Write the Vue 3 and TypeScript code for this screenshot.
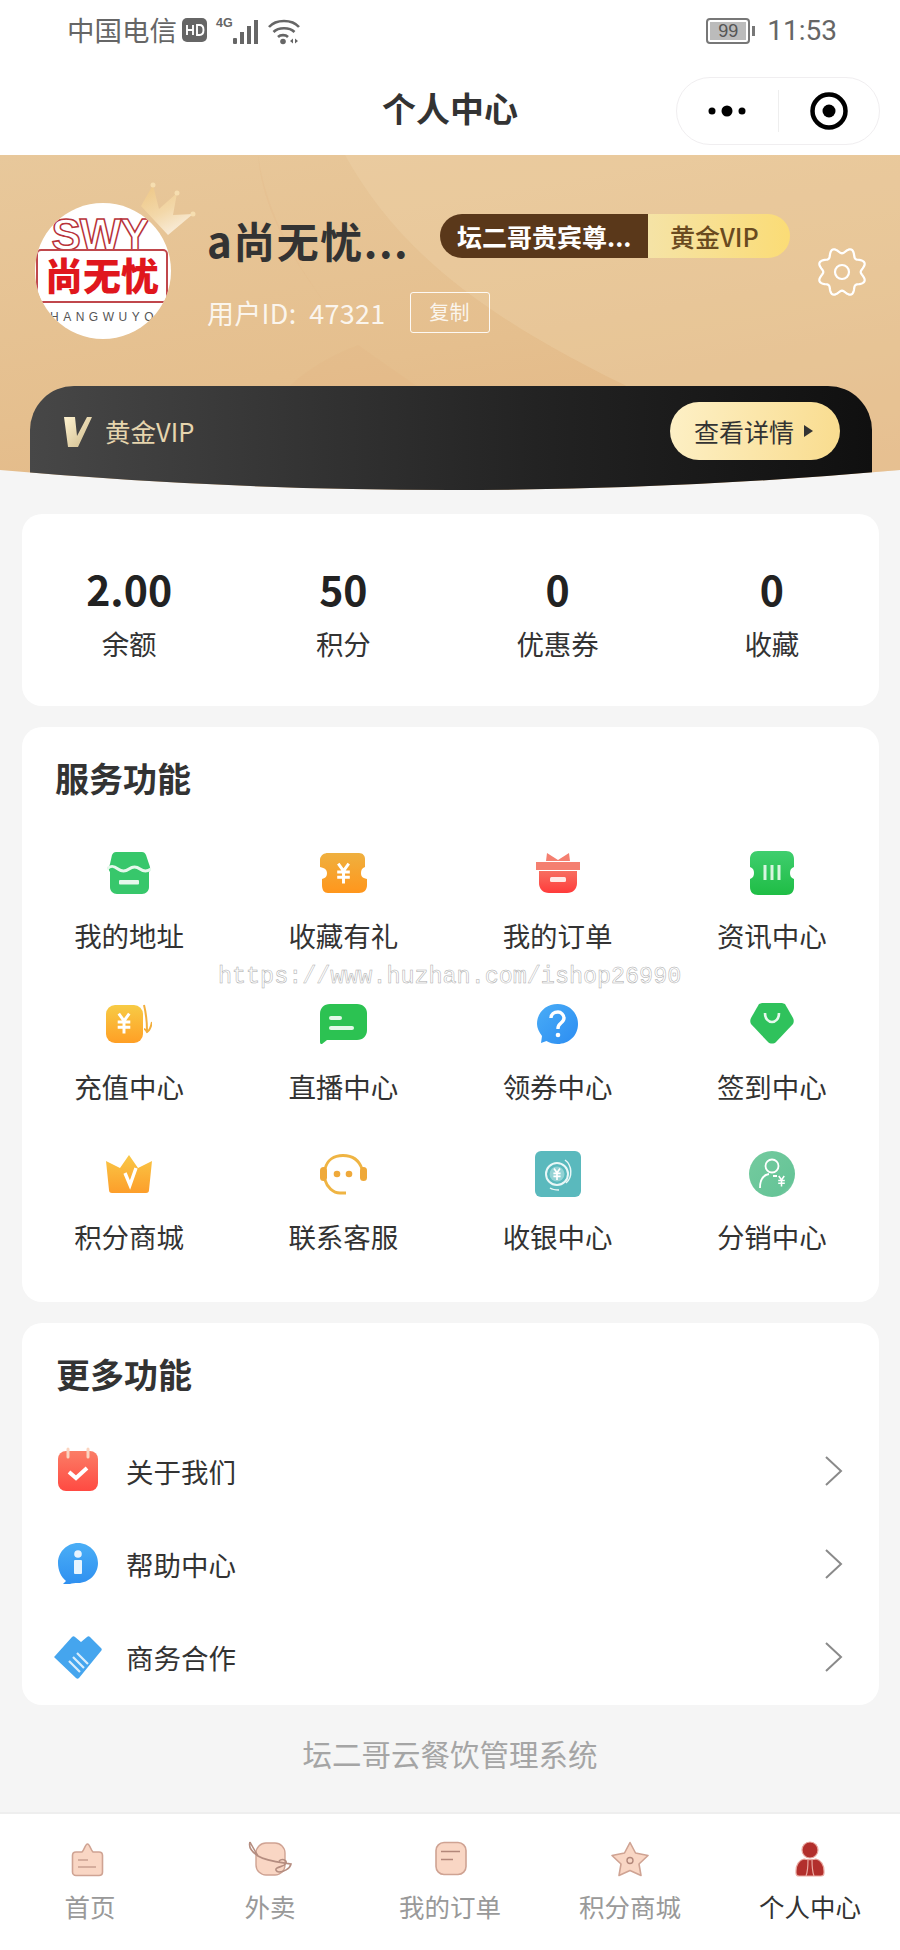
<script setup lang="ts">
const yen = (x: number, y: number, s = 1, c = "#fff") =>
  `<g transform="translate(${x} ${y}) scale(${s})" fill="none" stroke="${c}" stroke-width="2.8"><path d="M-5-9 0-2 5-9M-6-1H6M-6 4H6M0-2V10"/></g>`;

// rounded 8-tooth outline for the settings icon
const gearPath = Array.from({ length: 144 }, (_, i) => {
  const a = (i / 144) * Math.PI * 2;
  const r = 21.5 + 2.8 * Math.cos(a * 8 + Math.PI);
  return `${(25 + r * Math.cos(a)).toFixed(2)} ${(25 + r * Math.sin(a)).toFixed(2)}`;
}).join("L");

const services = [
  {
    label: "我的地址",
    w: 44,
    h: 42,
    svg: `<path fill="#37c76b" d="M9 0h26c2 0 3 1 4 3l3 9c1 3 2 5 0 8v15c0 4-3 7-7 7H10c-4 0-7-3-7-7V20c-2-3-1-5 0-8L5 3c1-2 2-3 4-3z"/><path fill="none" stroke="#e6f8ec" stroke-width="3" d="M0 17c4-4 7-3 11 0s7 3 11 0 7-3 11 0 7 3 11 0"/><rect x="12" y="28" width="20" height="4.500" rx="1" fill="#e6f8ec"/>`,
  },
  {
    label: "收藏有礼",
    w: 47,
    h: 40,
    svg: `<defs><linearGradient id="g2" x1="0" y1="0" x2="0" y2="1"><stop offset="0" stop-color="#efb03f"/><stop offset="1" stop-color="#ff961c"/></linearGradient></defs><path fill="url(#g2)" d="M8 0h31c4 0 6 3 6 6v8c-3 1-4 3-4 6s1 5 6 6v6c0 5-3 8-8 8H8c-4 0-6-3-6-8v-6c4-1 5-3 5-6s-2-5-7-6V6c1-4 4-6 8-6z"/>${yen(23.5, 20, 1.05)}`,
  },
  {
    label: "我的订单",
    w: 44,
    h: 40,
    svg: `<defs><linearGradient id="g3" x1="0" y1="0" x2="0" y2="1"><stop offset="0" stop-color="#f76e60"/><stop offset="1" stop-color="#ff3b3b"/></linearGradient></defs><path fill="#f47f70" d="M11 0l11 7L33 0l1 8H10zM0 9h44v8H0z"/><path fill="url(#g3)" d="M3 18h38v12c0 6-4 10-10 10H13C7 40 3 36 3 30z"/><rect x="14" y="24" width="16" height="5" rx="1.5" fill="#ffe9e6"/>`,
  },
  {
    label: "资讯中心",
    w: 44,
    h: 44,
    svg: `<defs><linearGradient id="g4" x1="0" y1="0" x2="0" y2="1"><stop offset="0" stop-color="#3fce6e"/><stop offset="1" stop-color="#1fbd45"/></linearGradient></defs><path fill="url(#g4)" d="M8 0h28c5 0 8 3 8 8v8c-3 1-4 3-4 6s1 5 4 6v8c0 5-3 8-8 8H8c-5 0-8-3-8-8v-8c3-1 4-3 4-6s-1-5-4-6V8c0-5 3-8 8-8z"/><path stroke="#d8f5e0" stroke-width="3" d="M15 14v15M22 14v15M29 14v15"/>`,
  },
  {
    label: "充值中心",
    w: 46,
    h: 40,
    svg: `<defs><linearGradient id="g5" x1="0" y1="0" x2="0" y2="1"><stop offset="0" stop-color="#f7cb45"/><stop offset="1" stop-color="#ff9f25"/></linearGradient></defs><rect y="1" width="37" height="38" rx="9" fill="url(#g5)"/>${yen(18, 19, 1.05)}<path fill="none" stroke="#f2ae3c" stroke-width="2" d="M38 1c2 8 3 14 3 26M46 18c-1 5-3 9-5 10-1-2-2-3-3-3"/>`,
  },
  {
    label: "直播中心",
    w: 47,
    h: 40,
    svg: `<path fill="#2cc252" d="M10 0h27c6 0 10 4 10 9v17c0 6-4 10-10 10H7L2 40c-1 0-2 0-2-2V10C0 4 4 0 10 0z"/><rect x="9" y="12" width="13" height="4" rx="2" fill="#e3f8e8"/><rect x="9" y="22" width="25" height="4" rx="2" fill="#e3f8e8"/>`,
  },
  {
    label: "领券中心",
    w: 41,
    h: 40,
    svg: `<defs><linearGradient id="g7" x1="0" y1="0" x2="1" y2="1"><stop offset="0" stop-color="#49acf6"/><stop offset="1" stop-color="#2c8df2"/></linearGradient></defs><path fill="url(#g7)" d="M20.500 0C32 0 41 8.500 41 20s-9 20-20.500 20c-4 0-8-1-11-3L4 39l1-7C2 28 0 24 0 20 0 8.500 9 0 20.500 0z"/><path fill="none" stroke="#fff" stroke-width="3.400" d="M14 14c0-4 3-6 7-6 3 0 6 3 6 6 0 5-6 5-6 10v1"/><circle cx="21" cy="31" r="2.300" fill="#fff"/>`,
  },
  {
    label: "签到中心",
    w: 44,
    h: 41,
    svg: `<path fill="#2fc25c" d="M12 0h20l3 1 8 14c1 2 1 4 0 6L26 39c-2 2-6 2-8 0L1 21c-1-2-1-4 0-6L9 1z"/><path fill="none" stroke="#e6f8ec" stroke-width="2.600" d="M15 10c0 12 14 12 14 0"/>`,
  },
  {
    label: "积分商城",
    w: 46,
    h: 38,
    svg: `<defs><linearGradient id="g9" x1="0" y1="0" x2="0" y2="1"><stop offset="0" stop-color="#f9c847"/><stop offset="1" stop-color="#fd9e2a"/></linearGradient></defs><path fill="url(#g9)" d="M23 0l9 13L46 6l-3 29c0 2-1 3-3 3H6c-2 0-3-1-3-3L0 6l14 7z"/><path fill="none" stroke="#fff" stroke-width="3.400" d="M19 18l5 12 6-17"/>`,
  },
  {
    label: "联系客服",
    w: 47,
    h: 41,
    svg: `<path fill="none" stroke="#efb443" stroke-width="2.800" d="M5 15C7 6 14 1.500 23 1.500S39 6 42 15M5 26c2 7 8 13 15 13h6"/><rect y="13" width="7" height="14" rx="3.500" fill="#efa93a"/><rect x="40" y="13" width="7" height="14" rx="3.500" fill="#efa93a"/><circle cx="17" cy="20" r="3.300" fill="#efa93a"/><circle cx="29" cy="20" r="3.300" fill="#efa93a"/>`,
  },
  {
    label: "收银中心",
    w: 46,
    h: 46,
    svg: `<rect width="46" height="46" rx="6" fill="#5ab9bd"/><circle cx="22" cy="23" r="11" fill="none" stroke="#e9f7f7" stroke-width="2"/><circle cx="22" cy="23" r="7.500" fill="#e9f7f7" opacity=".4"/><path fill="none" stroke="#e9f7f7" stroke-width="1.500" d="M30 9c7 5 8 17 1 23M24 39c-3 0-6 0-9-2"/>${yen(22, 23, 0.6)}`,
  },
  {
    label: "分销中心",
    w: 46,
    h: 46,
    svg: `<defs><linearGradient id="g12" x1="0" y1="0" x2="1" y2="1"><stop offset="0" stop-color="#74cb9f"/><stop offset=".8" stop-color="#66c497"/><stop offset="1" stop-color="#9ad3b8"/></linearGradient></defs><circle cx="23" cy="23" r="23" fill="url(#g12)"/><circle cx="23" cy="15" r="6.500" fill="none" stroke="#fff" stroke-width="1.800"/><path fill="none" stroke="#fff" stroke-width="1.800" d="M11 37c0-8 3-13 9-14M24 25h4"/>${yen(32.5, 30, 0.55)}`,
  },
];

const moreItems = [
  {
    label: "关于我们",
    svg: `<defs><linearGradient id="m1" x1="0" y1="0" x2="0" y2="1"><stop offset="0" stop-color="#fb7d66"/><stop offset="1" stop-color="#ff4a42"/></linearGradient></defs><rect x="4" y="4" width="40" height="40" rx="8" fill="url(#m1)"/><path stroke="#fbd4c0" stroke-width="3" stroke-linecap="round" d="M14 2v8M34 2v8"/><path fill="none" stroke="#fff" stroke-width="4" d="M15 25l7 6 11-10"/>`,
  },
  {
    label: "帮助中心",
    svg: `<defs><linearGradient id="m2" x1="0" y1="0" x2="0" y2="1"><stop offset="0" stop-color="#4aaef6"/><stop offset="1" stop-color="#2f90f0"/></linearGradient></defs><path fill="url(#m2)" d="M24 3c11 0 20 9 20 20s-9 20-20 20c-3 0-6 0-8 1H9l3-3C7 37 4 30 4 23 4 12 13 3 24 3z"/><circle cx="24" cy="14" r="3.800" fill="#e8f4fe"/><rect x="20" y="20" width="8" height="14" rx="1" fill="#e8f4fe"/>`,
  },
  {
    label: "商务合作",
    svg: `<path fill="#45a5ee" d="M1 23 18 4c1-1 2-1 3 0l6 5 6-5c1-1 2-1 3 0l11 11c1 1 1 2 0 3L25 45c-1 1-2 1-3 0L1 25c-1-1-1-1 0-2z"/><path stroke="#d8edfc" stroke-width="2.200" d="M15 28l11 11M19 24l11 11M23 20l11 11"/>`,
  },
];

const tabs = [
  {
    label: "首页",
    active: false,
    svg: `<path fill="#f9d6c4" stroke="#cfa393" stroke-width="1.600" stroke-linejoin="round" d="M7 11h6c2-1 3-8 5.500-8S22 10 24 11h6c2 0 3.500 1.500 3.500 3.500V31c0 2-1.500 3.500-3.500 3.500H7c-2 0-3.500-1.500-3.500-3.500V14.500C3.500 12.500 5 11 7 11z"/><path stroke="#c9a090" stroke-width="1.400" d="M9 19h10M9 26h18"/>`,
  },
  {
    label: "外卖",
    active: false,
    svg: `<rect x="7" y="2" width="29" height="32" rx="10" fill="#f9d6c4" stroke="#cfa393" stroke-width="1.400"/><path fill="none" stroke="#b58d80" stroke-width="1.600" d="M1 1C-1 7 3 11 9 15c8 5 20 6 33 8-1 5-8 8-12 8-3 0-4-3-2-4 3-2 7-1 9-5 1-3-4-5-7-2M1 1c2 4 5 9 8 14"/>`,
  },
  {
    label: "我的订单",
    active: false,
    svg: `<rect x="7" y="1.500" width="30" height="32" rx="8" fill="#f9d6c4" stroke="#cfa393" stroke-width="1.600"/><path stroke="#b3877a" stroke-width="1.600" d="M12 10.500h19M12 18.500h12"/>`,
  },
  {
    label: "积分商城",
    active: false,
    svg: `<path fill="#f9d6c4" stroke="#cfa393" stroke-width="1.600" stroke-linejoin="round" d="M21 1.500l5.500 10.500L39 14.500 30 23l2 11.500-11-5-11 5 2-11.500-9-8.500L15.500 12z"/><circle cx="21" cy="19.500" r="3" fill="none" stroke="#b3877a" stroke-width="1.400"/>`,
  },
  {
    label: "个人中心",
    active: true,
    svg: `<circle cx="21" cy="9" r="8" fill="#b22f2c" stroke="#e9a9a1" stroke-width="1.200"/><path fill="#b22f2c" stroke="#e9a9a1" stroke-width="1.200" d="M15 18c2 1 10 1 12 0 5 1 8 6 8 12v2c0 2-1 3-3 3H10c-2 0-3-1-3-3v-2c0-6 3-11 8-12z"/><path fill="none" stroke="#e9a9a1" stroke-width="1.200" d="M19 18c0 6 0 12-2 17M23 18c0 6 0 12 2 17"/>`,
  },
];

const stats = [
  { value: "2.00", label: "余额" },
  { value: "50", label: "积分" },
  { value: "0", label: "优惠券" },
  { value: "0", label: "收藏" },
];
</script>

<template>
  <div class="page">
    <div class="status">
      <div class="status-left">
        <span>中国电信</span>
        <svg width="25" height="24" viewBox="0 0 25 24" class="hd">
          <rect width="25" height="24" rx="5" fill="#666" />
          <path d="M5 7v10M5 12h6M11 7v10M15 7v10h2.500c3 0 4-2.200 4-5s-1-5-4-5z" fill="none" stroke="#fff" stroke-width="1.900" />
        </svg>
        <span class="net">4G</span>
        <svg width="26" height="26" viewBox="0 0 26 26" class="signal">
          <rect x="0" y="19" width="4" height="6" rx="1" fill="#666" />
          <rect x="7" y="13" width="4" height="12" fill="#666" />
          <rect x="14" y="7" width="4" height="18" fill="#666" />
          <rect x="21" y="1" width="4" height="24" fill="#666" />
        </svg>
        <svg width="32" height="26" viewBox="0 0 32 26" class="wifi">
          <path d="M1 8c7-8 23-8 30 0M5.500 13c5-5 16-5 21 0M10 18c2.500-2.500 7.500-2.500 10 0" fill="none" stroke="#666" stroke-width="2.600" />
          <circle cx="15" cy="22.500" r="2.800" fill="#666" />
          <path d="M22 22l3-2.500v5zM27 19.500l3 2.500-3 2.500z" fill="#666" />
        </svg>
      </div>
      <div class="status-right">
        <div class="battery">
          <span class="battery-level">99</span>
        </div>
        <i class="battery-tip"></i>
        <span class="time">11:53</span>
      </div>
    </div>

    <div class="nav">
      <span class="nav-title">个人中心</span>
      <div class="capsule">
        <svg width="40" height="12" viewBox="0 0 40 12">
          <circle cx="5" cy="6" r="3.500" />
          <circle cx="20" cy="6" r="5.500" />
          <circle cx="35" cy="6" r="3.500" />
        </svg>
        <i class="capsule-line"></i>
        <svg width="40" height="40" viewBox="0 0 40 40">
          <circle cx="20" cy="20" r="16.500" fill="none" stroke="#000" stroke-width="4.500" />
          <circle cx="20" cy="20" r="6.500" />
        </svg>
      </div>
    </div>

    <div class="hero">
      <svg class="hero-shapes" width="900" height="335" viewBox="0 0 900 335">
        <path d="M258 0c10 70 50 130 100 190l200 140H240c10-60 40-110 118-140C300 120 262 60 258 0z" fill="#e2b27e" opacity=".18" />
        <path d="M345 0c50 90 130 160 300 240l255 90V0z" fill="#eed6ae" opacity=".32" />
      </svg>
      <div class="profile">
        <div class="avatar">
          <svg class="avatar-logo" width="136" height="136" viewBox="0 0 136 136">
            <defs>
              <clipPath id="ac"><circle cx="68" cy="68" r="68" /></clipPath>
            </defs>
            <circle cx="68" cy="68" r="68" fill="#fff" />
            <g clip-path="url(#ac)">
              <text class="logo-swy" x="65" y="47">SWY</text>
              <rect x="2" y="47" width="130" height="52" rx="4" fill="#fff" stroke="#c0474c" stroke-width="2" />
              <text class="logo-name" x="67" y="87">尚无忧</text>
              <text class="logo-pinyin" x="69" y="118">HANGWUYO</text>
            </g>
          </svg>
          <svg class="crown" width="62" height="54" viewBox="0 0 62 54">
            <defs>
              <linearGradient id="cg" x1="0" y1="0" x2="0.500" y2="1">
                <stop offset="0" stop-color="#f0c67c" />
                <stop offset="0.600" stop-color="#f7dfb0" />
                <stop offset="1" stop-color="#fffaf0" />
              </linearGradient>
            </defs>
            <path d="M6 24 18 3l6 24L42 11l-4 22 20-1-25 21z" fill="url(#cg)" opacity=".72" />
            <circle cx="18" cy="3" r="2.500" fill="#f6deb0" />
            <circle cx="42" cy="11" r="2.500" fill="#f6deb0" />
            <circle cx="58" cy="32" r="2.500" fill="#f6deb0" />
          </svg>
        </div>
        <div class="profile-info">
          <div class="profile-top">
            <span class="profile-name">a尚无忧...</span>
            <div class="badge">
              <span class="badge-left">坛二哥贵宾尊...</span>
              <span class="badge-right">黄金VIP</span>
            </div>
          </div>
          <div class="profile-id">
            <span>用户ID:&nbsp;&nbsp;47321</span>
            <span class="copy">复制</span>
          </div>
        </div>
        <svg class="gear" width="50" height="50" viewBox="0 0 50 50">
          <path :d="`M${gearPath}Z`" fill="none" stroke="#fff" stroke-width="2.200" />
          <circle cx="25" cy="25" r="7" fill="none" stroke="#fff" stroke-width="2.200" />
        </svg>
      </div>
      <div class="vip">
        <svg width="30" height="32" viewBox="0 0 30 32">
          <defs>
            <linearGradient id="vg" x1="0" y1="0" x2="1" y2="1">
              <stop offset="0" stop-color="#fff3d0" />
              <stop offset="1" stop-color="#cdb98a" />
            </linearGradient>
          </defs>
          <path d="M1 1h11l2 19L24 1h5L15 31H5z" fill="url(#vg)" />
        </svg>
        <span class="vip-label">黄金VIP</span>
        <div class="vip-btn">
          <span>查看详情</span>
          <i class="vip-arrow"></i>
        </div>
      </div>
    </div>

    <div class="card stats">
      <div v-for="s in stats" :key="s.label" class="stat">
        <span class="stat-value">{{ s.value }}</span>
        <span class="stat-label">{{ s.label }}</span>
      </div>
    </div>

    <div class="card service">
      <h2 class="card-title">服务功能</h2>
      <div class="grid">
        <div v-for="item in services" :key="item.label" class="cell">
          <div class="cell-icon">
            <svg :width="item.w" :height="item.h" :viewBox="`0 0 ${item.w} ${item.h}`" v-html="item.svg"></svg>
          </div>
          <span class="cell-label">{{ item.label }}</span>
        </div>
      </div>
      <span class="watermark">https://www.huzhan.com/ishop26990</span>
    </div>

    <div class="card more">
      <h2 class="card-title">更多功能</h2>
      <div v-for="item in moreItems" :key="item.label" class="row">
        <svg width="48" height="48" viewBox="0 0 48 48" v-html="item.svg"></svg>
        <span class="row-label">{{ item.label }}</span>
        <svg class="chevron" width="20" height="32" viewBox="0 0 20 32">
          <path d="M2 2l15 14L2 30" fill="none" stroke="#8a8a8a" stroke-width="2" />
        </svg>
      </div>
    </div>

    <div class="footer">坛二哥云餐饮管理系统</div>

    <div class="tabbar">
      <div v-for="tab in tabs" :key="tab.label" class="tab" :class="{ 'is-active': tab.active }">
        <svg width="42" height="38" viewBox="0 0 42 38" overflow="visible" v-html="tab.svg"></svg>
        <span>{{ tab.label }}</span>
      </div>
    </div>
  </div>
</template>

<style>
html,
body {
  margin: 0;
  background: #f5f5f5;
}
</style>

<style scoped>
.page {
  --cjk: "Noto Sans CJK SC", "Noto Sans", sans-serif;

  width: 900px;
  height: 1950px;
  overflow: hidden;
  position: relative;

  background: #f5f5f5;
  color: #333;
  font-family: var(--cjk);

  display: flex;
  flex-direction: column;
}

.status {
  height: 60px;
  padding: 0 63px 0 67px;
  background: #fff;
  color: #666;
  font-size: 27.500px;

  display: flex;
  justify-content: space-between;
  align-items: center;
  box-sizing: border-box;
}

.status-left,
.status-right {
  display: flex;
  align-items: center;
  line-height: 1;
}

.hd {
  margin-left: 5px;
}

.net {
  margin: -14px 0 0 9px;
  font: 700 12.500px/14px "Liberation Sans", sans-serif;
}

.signal {
  margin: 3px 0 0 0;
}

.wifi {
  margin: 3px 0 0 9px;
}

.status-right {
  margin-top: 2px;
}

.battery {
  width: 44px;
  height: 26px;
  border: 2px solid #777;
  border-radius: 4px;
  padding: 2px;
  box-sizing: border-box;
}

.battery-level {
  height: 100%;
  background: #bbb;
  color: #555;
  font: 18px/18px "Liberation Sans", sans-serif;
  text-align: center;
  display: block;
}

.battery-tip {
  width: 3px;
  height: 10px;
  margin: 0 12px 0 2px;
  background: #777;
  display: block;
}

.time {
  font-family: "Roboto", sans-serif;
  font-size: 28px;
}

.nav {
  height: 95px;
  background: #fff;
  position: relative;

  display: flex;
  justify-content: center;
  align-items: center;
}

.nav-title {
  color: #333;
  font-size: 34px;
  font-weight: 700;
}

.capsule {
  width: 204px;
  height: 68px;
  padding: 0 30px;
  border: 1px solid #f0eef0;
  border-radius: 34px;
  box-sizing: border-box;

  position: absolute;
  top: 17px;
  right: 20px;

  display: flex;
  justify-content: space-between;
  align-items: center;
}

.capsule-line {
  width: 1px;
  height: 42px;
  background: #eee;
  display: block;
}

.hero {
  height: 335px;
  position: relative;
  background: linear-gradient(170deg, #e8c89b 0%, #e5bf8e 55%, #e2b482 100%);
  clip-path: path("M0 0H900V315Q450 355 0 315Z");

  display: flex;
  flex-direction: column;
}

.hero-shapes {
  position: absolute;
  top: 0;
  left: 0;
}

.profile {
  height: 138px;
  margin: 48px 33px 0 35px;
  position: relative;

  display: flex;
}

.avatar {
  width: 136px;
  height: 136px;
  flex: none;
  position: relative;
}

.avatar-logo {
  display: block;
}

.logo-swy {
  fill: #fff;
  stroke: #b8333a;
  stroke-width: 1.500px;
  font: 700 44px "Liberation Sans", sans-serif;
  letter-spacing: -1px;
  text-anchor: middle;
}

.logo-name {
  fill: #e0171d;
  font: 900 38px "Noto Sans CJK SC", sans-serif;
  text-anchor: middle;
}

.logo-pinyin {
  fill: #555;
  font: 12px "Liberation Sans", sans-serif;
  letter-spacing: 4.500px;
  text-anchor: middle;
}

.crown {
  position: absolute;
  top: -21px;
  left: 100px;
}

.profile-info {
  margin-left: 36px;
  flex: 1;
  display: flex;
  flex-direction: column;
}

.profile-top {
  height: 76px;
  display: flex;
  align-items: center;
}

.profile-name {
  width: 232px;
  margin-top: -4px;
  color: #333;
  font-size: 42px;
  font-weight: 700;
  letter-spacing: 1.500px;
  white-space: nowrap;
}

.badge {
  height: 44px;
  margin: -10px 0 0 1px;
  border-radius: 22px;
  overflow: hidden;
  font-size: 25px;
  font-weight: 700;
  line-height: 44px;

  display: flex;
}

.badge-left {
  width: 208px;
  padding-left: 17px;
  background: #5a381a;
  color: #fff;
  box-sizing: border-box;
  white-space: nowrap;
}

.badge-right {
  width: 142px;
  padding-left: 22px;
  background: linear-gradient(90deg, #f5e3a6, #fbdc76);
  color: #6a4a1f;
  box-sizing: border-box;
  font-weight: 500;
}

.profile-id {
  margin-top: 13px;
  color: rgba(255, 255, 255, 0.85);
  font-size: 27px;
  letter-spacing: 0.300px;
  line-height: 41px;

  display: flex;
  align-items: center;
}

.copy {
  width: 80px;
  height: 41px;
  margin-left: 24px;
  border: 1.500px solid rgba(255, 255, 255, 0.9);
  border-radius: 3px;
  font-size: 20px;
  line-height: 38px;
  text-align: center;
  box-sizing: border-box;
}

.gear {
  position: absolute;
  top: 44px;
  right: 0;
}

.vip {
  height: 104px;
  margin: auto 28px 0 30px;
  padding: 16px 32px 0 33px;
  background: linear-gradient(90deg, #474747 0%, #232323 60%, #101010 100%);
  border-radius: 44px 44px 0 0;
  position: relative;
  box-sizing: border-box;

  display: flex;
  align-items: flex-start;
}

.vip svg {
  margin-top: 14px;
}

.vip-label {
  margin: 11px 0 0 12px;
  color: #e6d5ae;
  font-size: 25.500px;
  line-height: 36px;
  flex: 1;
}

.vip-btn {
  width: 170px;
  height: 58px;
  padding-left: 24px;
  border-radius: 29px;
  background: linear-gradient(100deg, #fdf0c6, #f9dc8e);
  color: #333;
  font-size: 25px;
  box-sizing: border-box;

  display: flex;
  align-items: center;
}

.vip-arrow {
  margin-left: 10px;
  border-left: 9px solid #333;
  border-top: 6px solid transparent;
  border-bottom: 6px solid transparent;
  display: block;
}

.card {
  margin: 0 21px 0 22px;
  border-radius: 20px;
  background: #fff;
  position: relative;
}

.stats {
  height: 192px;
  margin-top: 24px;
  display: grid;
  grid-template-columns: repeat(4, 1fr);
}

.stat {
  padding-top: 48px;
  display: flex;
  flex-direction: column;
  align-items: center;
}

.stat-value {
  color: #222;
  font-size: 41px;
  font-weight: 700;
  line-height: 52px;
}

.stat-label {
  margin-top: 8px;
  color: #333;
  font-size: 27.500px;
  line-height: 42px;
}

.card-title {
  margin: 0;
  padding: 27px 0 0 33px;
  color: #333;
  font-size: 34px;
  font-weight: 700;
  line-height: 48px;
}

.service {
  height: 575px;
  margin-top: 21px;
}

.grid {
  margin-top: 47px;
  display: grid;
  grid-template-columns: repeat(4, 1fr);
  grid-auto-rows: 150.500px;
}

.cell {
  display: flex;
  flex-direction: column;
  align-items: center;
}

.cell-icon {
  height: 48px;
  display: flex;
  align-items: center;
  justify-content: center;
}

.cell-label {
  margin-top: 18px;
  color: #333;
  font-size: 27.500px;
  line-height: 40px;
}

.watermark {
  position: absolute;
  top: 235px;
  left: 196px;
  color: transparent;
  font: 23.400px/30px "Liberation Mono", monospace;
  -webkit-text-stroke: 0.500px #aaa;
  white-space: nowrap;
}

.more {
  height: 382px;
  margin-top: 21px;
}

.more .card-title {
  padding-left: 34px;
}

.more .card-title + .row {
  margin-top: 26px;
}

.row {
  height: 93px;
  padding: 0 35px 0 32px;
  display: flex;
  align-items: center;
}

.row-label {
  margin-left: 24px;
  color: #333;
  font-size: 27.500px;
  flex: 1;
}

.footer {
  height: 107px;
  padding-top: 24px;
  color: #a5a5a5;
  font-size: 29.500px;
  line-height: 48px;
  text-align: center;
  box-sizing: border-box;
}

.tabbar {
  height: 138px;
  padding-top: 27px;
  border-top: 2px solid #eee;
  background: #fff;
  box-sizing: border-box;

  display: grid;
  grid-template-columns: repeat(5, 1fr);
}

.tab {
  color: #999;
  font-size: 25.500px;
  line-height: 36px;

  display: flex;
  flex-direction: column;
  align-items: center;
}

.tab span {
  margin-top: 9px;
}

.tab.is-active {
  color: #333;
}
</style>
